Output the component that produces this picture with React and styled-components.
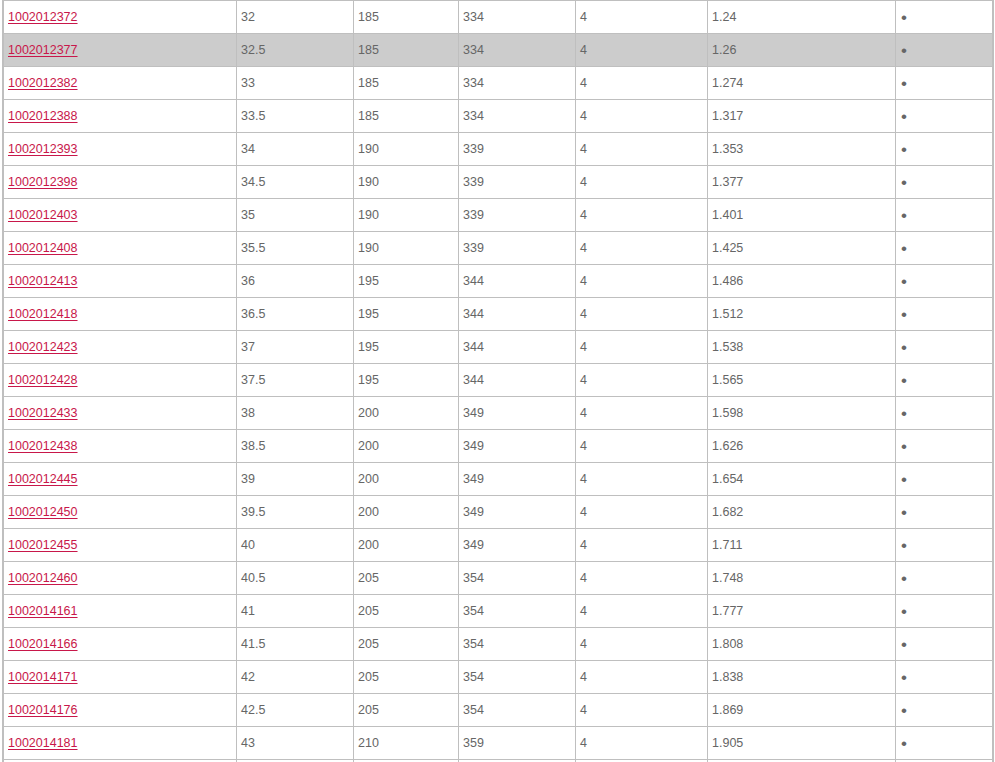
import styled, { createGlobalStyle } from "styled-components"

const GlobalStyle = createGlobalStyle`
    html, body {
        margin: 0;
        padding: 0;
        overflow: hidden;
        background-color: #FFFFFF;
    }
`

const rows = [
    ['1002012372', '32', '185', '334', '4', '1.24'],
    ['1002012377', '32.5', '185', '334', '4', '1.26'],
    ['1002012382', '33', '185', '334', '4', '1.274'],
    ['1002012388', '33.5', '185', '334', '4', '1.317'],
    ['1002012393', '34', '190', '339', '4', '1.353'],
    ['1002012398', '34.5', '190', '339', '4', '1.377'],
    ['1002012403', '35', '190', '339', '4', '1.401'],
    ['1002012408', '35.5', '190', '339', '4', '1.425'],
    ['1002012413', '36', '195', '344', '4', '1.486'],
    ['1002012418', '36.5', '195', '344', '4', '1.512'],
    ['1002012423', '37', '195', '344', '4', '1.538'],
    ['1002012428', '37.5', '195', '344', '4', '1.565'],
    ['1002012433', '38', '200', '349', '4', '1.598'],
    ['1002012438', '38.5', '200', '349', '4', '1.626'],
    ['1002012445', '39', '200', '349', '4', '1.654'],
    ['1002012450', '39.5', '200', '349', '4', '1.682'],
    ['1002012455', '40', '200', '349', '4', '1.711'],
    ['1002012460', '40.5', '205', '354', '4', '1.748'],
    ['1002014161', '41', '205', '354', '4', '1.777'],
    ['1002014166', '41.5', '205', '354', '4', '1.808'],
    ['1002014171', '42', '205', '354', '4', '1.838'],
    ['1002014176', '42.5', '205', '354', '4', '1.869'],
    ['1002014181', '43', '210', '359', '4', '1.905'],
]

// widths include each cell's right border
const columns = [233, 117, 105, 117, 132, 188, 98]

export default function App(){
    const selectedRow = 1

    return(
        <>
            <GlobalStyle/>
            <Page>
                <SizeTable>
                    <colgroup>
                        {columns.map((w, i) => (
                            <col key={i} style={{ width: w }}/>
                        ))}
                    </colgroup>
                    <tbody>
                        {rows.map((row, index) => (
                            <Row key={row[0]} isSelected={index === selectedRow}>
                                <Cell>
                                    <ProductLink href="#">{row[0]}</ProductLink>
                                </Cell>
                                {row.slice(1).map((value, i) => (
                                    <Cell key={i}>{value}</Cell>
                                ))}
                                <Cell className="last">
                                    <Dot>•</Dot>
                                </Cell>
                            </Row>
                        ))}
                        {/* next row, only its top edge shows */}
                        <Row>
                            {columns.map((w, i) => (
                                <Cell key={i} className={i === columns.length - 1 ? 'last' : ''}></Cell>
                            ))}
                        </Row>
                    </tbody>
                </SizeTable>
            </Page>
        </>
    )
}

const Page = styled.main`
    padding-left: 2px;
    height: 762px;
    overflow: hidden;
`
const SizeTable = styled.table`
    width: 992px;
    table-layout: fixed;
    border-collapse: separate;
    border-spacing: 0;
    border-top: 1px solid #BFBFBF;
    border-left: 2px solid #BFBFBF;
    font-family: "Liberation Sans", Arial, sans-serif;
    font-size: 12.5px;
    color: #666666;
`
const Row = styled.tr`
    background-color: ${props => props.isSelected ? '#CCCCCC' : '#FFFFFF'};
`
const Cell = styled.td`
    box-sizing: border-box;
    height: 33px;
    padding: 0 0 0 4px;
    border-right: 1px solid #BFBFBF;
    border-bottom: 1px solid #BFBFBF;
    vertical-align: middle;
    white-space: nowrap;
    &.last{
        padding-left: 5px;
        border-right-width: 2px;
    }
`
const ProductLink = styled.a`
    color: #C8174A;
    text-decoration: underline;
    text-underline-offset: 2px;
`
const Dot = styled.span`
    color: #666666;
    font-size: 17px;
    line-height: 1;
`
